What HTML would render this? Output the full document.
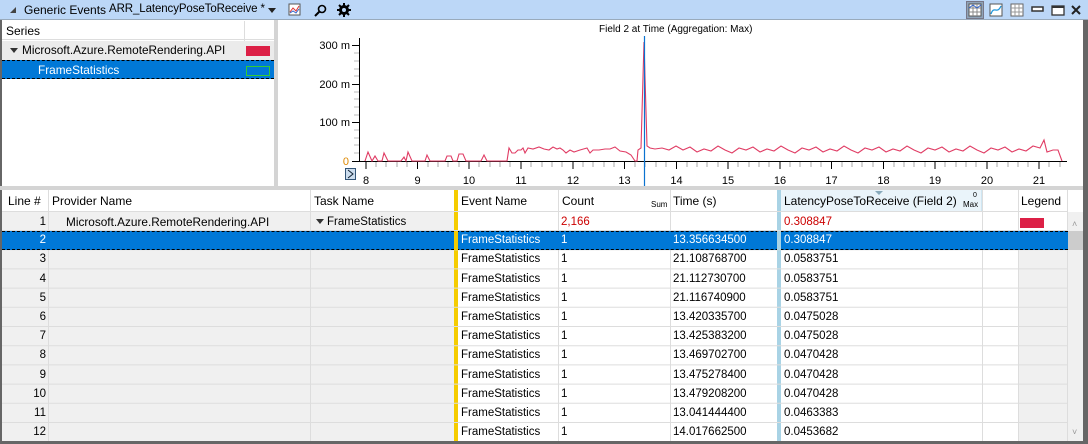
<!DOCTYPE html>
<html><head><meta charset="utf-8"><style>
*{margin:0;padding:0;box-sizing:border-box}
body{width:1088px;height:444px;overflow:hidden;background:#fff;font-family:"Liberation Sans",sans-serif;font-size:11.5px;color:#000;position:relative}
.a{position:absolute}
.r{position:absolute;left:2px;width:1066px;height:19px}
.c{position:absolute;top:0;height:19px;line-height:19px;white-space:nowrap;overflow:hidden;padding-left:3px}
</style></head><body>
<div class="a" style="left:0;top:0;width:1088px;height:20px;background:#bcd7f7;border-bottom:1px solid #9ab"></div>
<div class="a" style="left:10px;top:7px;width:0;height:0;border-left:6px solid transparent;border-bottom:6px solid #444"></div>
<div class="a" style="left:24px;top:3px;font-size:12px;white-space:nowrap">Generic Events</div>
<div class="a" style="left:109px;top:3px;font-size:11.5px;white-space:nowrap;letter-spacing:-0.1px">ARR_LatencyPoseToReceive *</div>
<div class="a" style="left:268px;top:8px;border-left:4px solid transparent;border-right:4px solid transparent;border-top:5px solid #222"></div>
<svg class="a" style="left:288px;top:3px" width="80" height="16"><rect x="1" y="1" width="11" height="11" fill="#fff" stroke="#555"/><path d="M2 9 L5 5 L8 8 L11 3" stroke="#d33" fill="none"/><path d="M2 10 L5 8 L8 10 L11 6" stroke="#36c" fill="none"/>
<circle cx="34" cy="6" r="3.5" stroke="#000" stroke-width="1.6" fill="none"/><path d="M31.5 8.5 L27 13" stroke="#000" stroke-width="2"/>
<circle cx="56" cy="7" r="5" fill="#000"/><path d="M56 0v14M49 7h14M51 2l10 10M61 2l-10 10" stroke="#000" stroke-width="2"/><circle cx="56" cy="7" r="2" fill="#bcd7f7"/></svg>
<svg class="a" style="left:966px;top:1px" width="120" height="18">
<rect x="0.5" y="0.5" width="17" height="17" fill="#8fa3b8" stroke="#778"/><rect x="3" y="3" width="12" height="12" fill="#fff" stroke="#555"/><path d="M3 7h12M3 11h12M7 3v12M11 3v12" stroke="#888"/><path d="M3 7 L7 4 L11 7 L15 4" stroke="#36c" fill="none"/>
<rect x="24" y="3" width="12" height="12" fill="#fff" stroke="#555"/><path d="M25 13 C28 4 31 14 35 5" stroke="#29d" fill="none" stroke-width="1.3"/>
<rect x="45" y="3" width="12" height="12" fill="#fff" stroke="#666"/><path d="M45 7h12M45 11h12M49 3v12M53 3v12" stroke="#999"/>
<rect x="66" y="6" width="11" height="4" fill="#fff" stroke="#333" stroke-width="1.5"/>
<rect x="86" y="5" width="12" height="9" fill="#fff" stroke="#333" stroke-width="1.3"/><path d="M86 6h12" stroke="#333" stroke-width="2"/>
<path d="M106 5l8 8M114 5l-8 8" stroke="#222" stroke-width="2"/></svg>
<div class="a" style="left:0;top:20px;width:2px;height:424px;background:#666"></div>
<div class="a" style="left:1083px;top:20px;width:5px;height:424px;background:#666"></div>
<div class="a" style="left:0;top:441px;width:1088px;height:3px;background:#666"></div>
<div class="a" style="left:2px;top:21px;width:272px;height:19px;border-bottom:1px solid #ddd"></div>
<div class="a" style="left:244px;top:21px;width:1px;height:58px;background:#ddd"></div>
<div class="a" style="left:6px;top:24px;font-size:12px">Series</div>
<div class="a" style="left:2px;top:41px;width:272px;height:19px;background:#ebebeb"></div>
<div class="a" style="left:10px;top:48px;border-left:4px solid transparent;border-right:4px solid transparent;border-top:5px solid #333"></div>
<div class="a" style="left:22px;top:43px;font-size:11.8px;white-space:nowrap">Microsoft.Azure.RemoteRendering.API</div>
<div class="a" style="left:246px;top:46px;width:24px;height:10px;background:#dc2046"></div>
<div class="a" style="left:2px;top:60px;width:272px;height:19px;background:#0078d7;border-top:1px dashed #000;border-bottom:1px dashed #000"></div>
<div class="a" style="left:38px;top:63px;color:#fff;font-size:11.8px">FrameStatistics</div>
<div class="a" style="left:246px;top:66px;width:24px;height:10px;border:1px solid #3c3"></div>
<div class="a" style="left:274px;top:20px;width:4px;height:166px;background:#d4d4d4"></div>
<svg class="a" style="left:0;top:0" width="1083" height="186" font-family="Liberation Sans" font-size="11">
<text x="599" y="32" font-size="10">Field 2 at Time (Aggregation: Max)</text>
<line x1="359.5" y1="38" x2="359.5" y2="161" stroke="#000"/>
<line x1="359" y1="161.5" x2="1067" y2="161.5" stroke="#000"/>
<g stroke="#000"><path d="M352 45.5h8M352 84.5h8M352 122.5h8M352 161.5h8"/></g>
<g stroke="#bbb"><path d="M354 53h5M354 61h5M354 69h5M354 76h5M354 92h5M354 99h5M354 107h5M354 115h5M354 130h5M354 138h5M354 145h5M354 153h5"/></g>
<g text-anchor="end" fill="#000"><text x="350" y="49">300 m</text><text x="350" y="88">200 m</text><text x="350" y="126">100 m</text><text x="349" y="165" fill="#d80">0</text></g>
<path d="M366 161v8M417.5 161v8M469 161v8M521 161v8M573 161v8M624.5 161v8M676.5 161v8M728 161v8M780 161v8M831.5 161v8M883.5 161v8M935 161v8M987 161v8M1039 161v8" stroke="#000"/>
<path d="M376 162v5M386 162v5M397 162v5M407 162v5M428 162v5M438 162v5M448 162v5M459 162v5M479 162v5M490 162v5M500 162v5M510 162v5M531 162v5M542 162v5M552 162v5M562 162v5M583 162v5M593 162v5M604 162v5M614 162v5M635 162v5M645 162v5M656 162v5M666 162v5M687 162v5M697 162v5M707 162v5M718 162v5M738 162v5M749 162v5M759 162v5M769 162v5M790 162v5M800 162v5M811 162v5M821 162v5M842 162v5M852 162v5M862 162v5M873 162v5M894 162v5M904 162v5M914 162v5M925 162v5M945 162v5M956 162v5M966 162v5M976 162v5M997 162v5M1008 162v5M1018 162v5M1028 162v5M1049 162v5M1060 162v5" stroke="#aaa"/>
<g text-anchor="middle"><text x="366" y="184">8</text><text x="417.5" y="184">9</text><text x="469" y="184">10</text><text x="521" y="184">11</text><text x="573" y="184">12</text><text x="624.5" y="184">13</text><text x="676.5" y="184">14</text><text x="728" y="184">15</text><text x="780" y="184">16</text><text x="831.5" y="184">17</text><text x="883.5" y="184">18</text><text x="935" y="184">19</text><text x="987" y="184">20</text><text x="1039" y="184">21</text></g>
<rect x="345.5" y="168.5" width="10" height="11" fill="#cde" stroke="#357"/><path d="M348 170l5 4l-5 4" stroke="#123" fill="none"/>
<polyline fill="none" stroke="#e03c64" stroke-width="1.1" points="365,161 368,152 372,161 375,156 378,161 382,161 384,153 388,161 401,161 404,157 406,161 408,152 412,161 425,161 427,155 430,161 445,161 447,156 451,156 453,161 457,161 459,154 463,154 466,161 481,161 484,155 487,161 507,161 509,148 512,153 515,153 518,150 521,150 523,148 525,153 528,148 533,149 539,147 544,149 549,150 553,147 557,149 560,148 563,150 566,153 570,150 574,152 580,150 587,148 590,153 593,150 599,150 605,149 610,149 615,147 620,151 626,152 631,155 635,161 637,161 638,150 641,148 644,42 647,146 650,148 655,149 662,148 669,150 676,146 683,150 690,147 697,152 704,149 711,151 718,146 725,150 732,153 739,148 746,150 753,147 760,152 767,149 774,151 781,146 788,150 795,153 802,148 809,150 816,147 823,152 830,149 837,151 844,146 851,150 858,153 865,148 872,150 879,147 886,152 893,149 900,151 907,146 914,150 921,153 928,148 935,150 942,147 949,152 956,149 963,151 970,146 977,150 984,153 991,148 998,150 1005,147 1012,152 1019,149 1026,151 1033,146 1040,148 1044,140 1047,152 1053,150 1058,150 1062,161"/>
<line x1="644.5" y1="36" x2="644.5" y2="186" stroke="#0a72d0" stroke-width="1.2"/>
</svg>
<div class="a" style="left:0;top:186px;width:1083px;height:4px;background:#d4d4d4"></div>
<div class="a" style="left:2px;top:190px;width:1081px;height:251px;background:#fff"></div>
<div class="a" style="left:1068px;top:212px;width:15px;height:229px;background:#f0f0f0"></div>
<div class="a" style="left:1018px;top:250px;width:50px;height:191px;background:#f0f0f0"></div>
<div class="a" style="left:2px;top:212px;width:452px;height:229px;background:#f0f0f0"></div>
<div class="a" style="left:1068px;top:231px;width:15px;height:19px;background:#ccc"></div>
<div class="a" style="left:1072px;top:219px;font-size:9px;color:#999">˄</div>
<div class="a" style="left:1072px;top:427px;font-size:9px;color:#999">˅</div>
<div class="a" style="left:454px;top:190px;width:4px;height:251px;background:#f5cc00"></div>
<div class="a" style="left:777px;top:190px;width:4px;height:251px;background:#a9d3e5"></div>
<div class="a" style="left:781px;top:190px;width:201px;height:22px;background:#eaf4fa;border-right:1px solid #cfe6f2"></div>
<div class="a" style="left:875px;top:191px;border-left:4px solid transparent;border-right:4px solid transparent;border-top:4px solid #8ab"></div>
<div class="a" style="left:2px;top:211px;width:1066px;height:1px;background:#ddd"></div>
<div class="a" style="left:0;top:190px;width:1068px;height:22px;line-height:22px;font-size:12px">
<div class="c" style="left:5px;height:22px;line-height:22px">Line #</div>
<div class="c" style="left:49px;height:22px;line-height:22px">Provider Name</div>
<div class="c" style="left:311px;height:22px;line-height:22px">Task Name</div>
<div class="c" style="left:458px;height:22px;line-height:22px">Event Name</div>
<div class="c" style="left:559px;height:22px;line-height:22px">Count</div>
<div class="c" style="left:648px;top:4px;height:22px;line-height:22px;font-size:8px">Sum</div>
<div class="c" style="left:670px;height:22px;line-height:22px">Time (s)</div>
<div class="c" style="left:781px;height:22px;line-height:22px">LatencyPoseToReceive (Field 2)</div>
<div class="c" style="left:960px;top:4px;height:22px;line-height:22px;font-size:8px">Max</div>
<div class="c" style="left:970px;top:-5px;height:22px;line-height:22px;font-size:7px">0</div>
<div class="c" style="left:1018px;height:22px;line-height:22px">Legend</div>
</div>
<svg class="a" style="left:0;top:190px" width="1083" height="251"><g stroke="#ddd"><path d="M48.5 0v251M310.5 0v251M558.5 0v251M670.5 0v251M982.5 0v251M1018.5 0v251M1067.5 0v251"/>
<path d="M2 40.5h1066M2 59.7h1066M2 78.9h1066M2 98.1h1066M2 117.3h1066M2 136.5h1066M2 155.7h1066M2 174.9h1066M2 194.1h1066M2 213.3h1066M2 232.5h1066"/></g></svg>
<div class="r" style="top:213px">
<div class="c" style="left:0;width:44px;text-align:right;padding:0">1</div>
<div class="c" style="left:61px;font-size:11.8px">Microsoft.Azure.RemoteRendering.API</div>
<div class="c" style="left:314px;padding:0"><span style="display:inline-block;border-left:4px solid transparent;border-right:4px solid transparent;border-top:5px solid #333;vertical-align:middle;margin-right:3px"></span>FrameStatistics</div>
<div class="c" style="left:556px;color:#c00">2,166</div>
<div class="c" style="left:779px;color:#c00">0.308847</div>
<div class="a" style="left:1018px;top:5px;width:24px;height:10px;background:#dc2046"></div>
</div>
<div class="r" style="top:231px;background:#0078d7;border-top:1px dashed #000;border-bottom:1px dashed #000;color:#fff">
<div class="c" style="left:0;width:44px;text-align:right;padding:0;top:-1px">2</div>
<div class="a" style="left:452px;top:-1px;width:4px;height:19px;background:#f5cc00"></div>
<div class="a" style="left:775px;top:-1px;width:4px;height:19px;background:#a9d3e5"></div>
<div class="c" style="left:456px;top:-1px">FrameStatistics</div>
<div class="c" style="left:556px;top:-1px">1</div>
<div class="c" style="left:668px;top:-1px">13.356634500</div>
<div class="c" style="left:779px;top:-1px">0.308847</div>
</div>
<div class="r" style="top:250.4px"><div class="c" style="left:0;width:44px;text-align:right;padding:0">3</div><div class="c" style="left:456px">FrameStatistics</div><div class="c" style="left:556px">1</div><div class="c" style="left:668px">21.108768700</div><div class="c" style="left:779px">0.0583751</div></div>
<div class="r" style="top:269.6px"><div class="c" style="left:0;width:44px;text-align:right;padding:0">4</div><div class="c" style="left:456px">FrameStatistics</div><div class="c" style="left:556px">1</div><div class="c" style="left:668px">21.112730700</div><div class="c" style="left:779px">0.0583751</div></div>
<div class="r" style="top:288.8px"><div class="c" style="left:0;width:44px;text-align:right;padding:0">5</div><div class="c" style="left:456px">FrameStatistics</div><div class="c" style="left:556px">1</div><div class="c" style="left:668px">21.116740900</div><div class="c" style="left:779px">0.0583751</div></div>
<div class="r" style="top:308px"><div class="c" style="left:0;width:44px;text-align:right;padding:0">6</div><div class="c" style="left:456px">FrameStatistics</div><div class="c" style="left:556px">1</div><div class="c" style="left:668px">13.420335700</div><div class="c" style="left:779px">0.0475028</div></div>
<div class="r" style="top:327.2px"><div class="c" style="left:0;width:44px;text-align:right;padding:0">7</div><div class="c" style="left:456px">FrameStatistics</div><div class="c" style="left:556px">1</div><div class="c" style="left:668px">13.425383200</div><div class="c" style="left:779px">0.0475028</div></div>
<div class="r" style="top:346.4px"><div class="c" style="left:0;width:44px;text-align:right;padding:0">8</div><div class="c" style="left:456px">FrameStatistics</div><div class="c" style="left:556px">1</div><div class="c" style="left:668px">13.469702700</div><div class="c" style="left:779px">0.0470428</div></div>
<div class="r" style="top:365.6px"><div class="c" style="left:0;width:44px;text-align:right;padding:0">9</div><div class="c" style="left:456px">FrameStatistics</div><div class="c" style="left:556px">1</div><div class="c" style="left:668px">13.475278400</div><div class="c" style="left:779px">0.0470428</div></div>
<div class="r" style="top:384.8px"><div class="c" style="left:0;width:44px;text-align:right;padding:0">10</div><div class="c" style="left:456px">FrameStatistics</div><div class="c" style="left:556px">1</div><div class="c" style="left:668px">13.479208200</div><div class="c" style="left:779px">0.0470428</div></div>
<div class="r" style="top:404px"><div class="c" style="left:0;width:44px;text-align:right;padding:0">11</div><div class="c" style="left:456px">FrameStatistics</div><div class="c" style="left:556px">1</div><div class="c" style="left:668px">13.041444400</div><div class="c" style="left:779px">0.0463383</div></div>
<div class="r" style="top:423.2px"><div class="c" style="left:0;width:44px;text-align:right;padding:0">12</div><div class="c" style="left:456px">FrameStatistics</div><div class="c" style="left:556px">1</div><div class="c" style="left:668px">14.017662500</div><div class="c" style="left:779px">0.0453682</div></div>
</body></html>
